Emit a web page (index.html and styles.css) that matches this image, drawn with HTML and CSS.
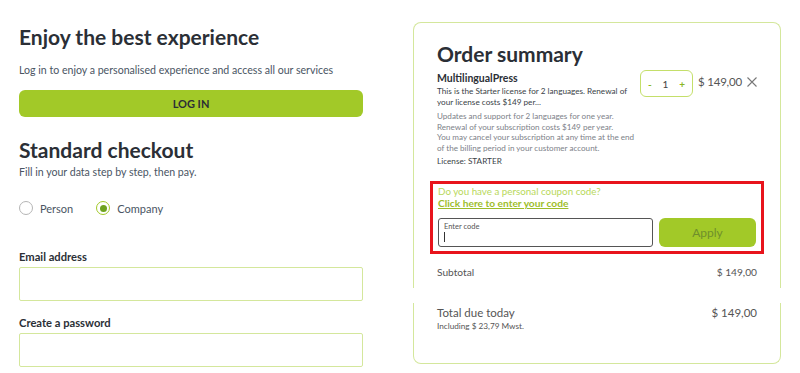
FILE: index.html
```html
<!DOCTYPE html>
<html lang="en">
<head>
  <meta charset="UTF-8">
  <title>Checkout</title>
  <link rel="stylesheet" href="styles.css">
</head>
<body>
  <div class="page">
    <div class="checkout">
      <h1>Enjoy the best experience</h1>
      <p class="lead">Log in to enjoy a personalised experience and access all our services</p>
      <button class="login-btn">LOG IN</button>

      <h2>Standard checkout</h2>
      <p class="sub">Fill in your data step by step, then pay.</p>

      <div class="radios">
        <label class="radio"><span class="dot"></span>Person</label>
        <label class="radio checked"><span class="dot"></span>Company</label>
      </div>

      <label class="field-label">Email address</label>
      <div class="field"></div>

      <label class="field-label">Create a password</label>
      <div class="field"></div>
    </div>

    <div class="summary">
      <div class="card-top">
        <h2 class="summary-title">Order summary</h2>

        <div class="item">
          <div class="item-info">
            <div class="item-name">MultilingualPress</div>
            <p class="item-desc">This is the Starter license for 2 languages. Renewal of your license costs $149 per...</p>
            <p class="item-note">Updates and support for 2 languages for one year.<br>Renewal of your subscription costs $149 per year.<br>You may cancel your subscription at any time at the end<br>of the billing period in your customer account.</p>
            <p class="item-license">License: STARTER</p>
          </div>
          <div class="qty">
            <span class="qty-btn">-</span>
            <span class="qty-num">1</span>
            <span class="qty-btn">+</span>
          </div>
          <div class="item-price">$ 149,00</div>
          <svg class="remove" width="10" height="10" viewBox="0 0 10 10">
            <path d="M0.5 0.5 L9.5 9.5 M9.5 0.5 L0.5 9.5" stroke="#777" stroke-width="1.1" fill="none"/>
          </svg>
        </div>

        <div class="coupon">
          <div class="coupon-q">Do you have a personal coupon code?</div>
          <a class="coupon-link" href="#">Click here to enter your code</a>
          <div class="coupon-row">
            <div class="code-input">
              <span class="code-label">Enter code</span>
              <span class="caret"></span>
            </div>
            <button class="apply-btn">Apply</button>
          </div>
        </div>

        <div class="row subtotal">
          <span>Subtotal</span>
          <span>$ 149,00</span>
        </div>
      </div>

      <div class="card-bottom">
        <div class="row total">
          <span>Total due today</span>
          <span>$ 149,00</span>
        </div>
        <div class="tax">Including $ 23,79 Mwst.</div>
      </div>
    </div>
  </div>
</body>
</html>
```

FILE: styles.css
```css
body {
  margin: 0;
  background: #fff;
  font-family: 'Lato', 'Noto Sans', sans-serif;
  color: #2b2f36;
}

.page {
  display: flex;
  gap: 50px;
  padding: 0 19px;
}

.checkout {
  width: 344px;
  flex-shrink: 0;
}

h1 {
  font-size: 21px;
  font-weight: 700;
  line-height: 26px;
  margin: 24px 0 0;
}

.lead {
  font-size: 10.6px;
  color: #4a5563;
  margin: 13px 0 0;
  line-height: 14px;
}

.login-btn {
  display: block;
  width: 100%;
  height: 27px;
  margin-top: 13px;
  border: none;
  border-radius: 6px;
  background: #a2c928;
  font-family: inherit;
  font-size: 11px;
  font-weight: 700;
  color: #2b2f36;
}

h2 {
  font-size: 21px;
  font-weight: 700;
  line-height: 26px;
  margin: 20px 0 0;
}

.sub {
  font-size: 10.6px;
  color: #4a5563;
  margin: 2px 0 0;
  line-height: 14px;
}

.radios {
  display: flex;
  gap: 23px;
  margin-top: 22px;
}

.radio {
  display: flex;
  align-items: center;
  gap: 7px;
  font-size: 11px;
  color: #4a5563;
}

.dot {
  width: 14px;
  height: 14px;
  border: 1px solid #b5b5b5;
  border-radius: 50%;
  box-sizing: border-box;
  position: relative;
}

.radio.checked .dot {
  border-color: #a2c928;
}

.radio.checked .dot::after {
  content: "";
  position: absolute;
  left: 2.5px;
  top: 2.5px;
  width: 7px;
  height: 7px;
  border-radius: 50%;
  background: #6ea21f;
}

.field-label {
  display: block;
  font-size: 11.2px;
  font-weight: 700;
  margin-top: 35px;
  line-height: 14px;
}

.field-label + .field {
  margin-top: 3px;
}

.field {
  height: 34px;
  border: 1px solid #d4e79c;
  border-radius: 2px;
  box-sizing: border-box;
}

.field + .field-label {
  margin-top: 15px;
}

/* order summary card */
.summary {
  width: 368px;
  margin-top: 22px;
  flex-shrink: 0;
}

.card-top {
  border: 1px solid #d4e79c;
  border-bottom: none;
  border-radius: 8px 8px 0 0;
  padding: 18px 23px 9px;
}

.card-bottom {
  border: 1px solid #d4e79c;
  border-top: none;
  border-radius: 0 0 8px 8px;
  padding: 2px 23px 32px;
  margin-top: 15px;
}

.summary-title {
  margin: 0;
  font-size: 21px;
  line-height: 26px;
}

.item {
  display: flex;
  align-items: flex-start;
  margin-top: 3px;
}

.item-info {
  flex: 0 0 203px;
}

.item-name {
  font-size: 10.5px;
  font-weight: 700;
  line-height: 13px;
  margin-top: 2px;
}

.item-desc {
  font-size: 8.2px;
  line-height: 10.5px;
  margin: 1px 0 0;
  color: #3a3f47;
}

.item-note {
  font-size: 8.1px;
  line-height: 10.5px;
  margin: 4px 0 0;
  color: #7d8189;
  white-space: nowrap;
}

.item-license {
  font-size: 8.2px;
  line-height: 10.5px;
  margin: 3px 0 0;
  color: #3a3f47;
}

.qty {
  display: flex;
  align-items: center;
  justify-content: space-between;
  flex: 0 0 53px;
  height: 27px;
  box-sizing: border-box;
  border: 1px solid #c4df6a;
  border-radius: 6px;
  padding: 0 7px;
  font-size: 10px;
}

.qty-btn {
  color: #8cb724;
  font-weight: 700;
}

.qty-num {
  color: #444;
}

.item-price {
  font-size: 11.5px;
  letter-spacing: -0.2px;
  color: #555;
  margin-left: 5px;
  margin-top: 5px;
  white-space: nowrap;
}

.remove {
  margin-left: auto;
  margin-top: 7px;
}

.coupon {
  border: 3px solid #e8141c;
  margin: 14px -7px 0;
  padding: 1px 5px 4px;
}

.coupon-q {
  font-size: 9.8px;
  color: #b8d85a;
  line-height: 12px;
}

.coupon-link {
  display: block;
  width: max-content;
  font-size: 10.2px;
  font-weight: 700;
  color: #9dbd2a;
  line-height: 12px;
}

.coupon-row {
  display: flex;
  gap: 6px;
  margin-top: 9px;
}

.code-input {
  width: 215px;
  height: 29px;
  border: 1px solid #555;
  border-radius: 3px;
  box-sizing: border-box;
  padding: 3px 5px;
}

.code-label {
  display: block;
  font-size: 7.5px;
  color: #555;
  line-height: 9px;
}

.caret {
  display: block;
  width: 1px;
  height: 10px;
  background: #333;
  margin-top: 1px;
}

.apply-btn {
  flex: 1;
  height: 29px;
  border: none;
  border-radius: 6px;
  background: #a2c928;
  font-family: inherit;
  font-size: 12px;
  color: #6f8f2b;
}

.row {
  display: flex;
  justify-content: space-between;
}

.subtotal {
  font-size: 10.2px;
  color: #555;
  margin-top: 11px;
  line-height: 14px;
}

.total {
  font-size: 11.5px;
  color: #555;
  line-height: 15px;
}

.tax {
  font-size: 8.2px;
  color: #555;
  margin-top: 1px;
}
```
